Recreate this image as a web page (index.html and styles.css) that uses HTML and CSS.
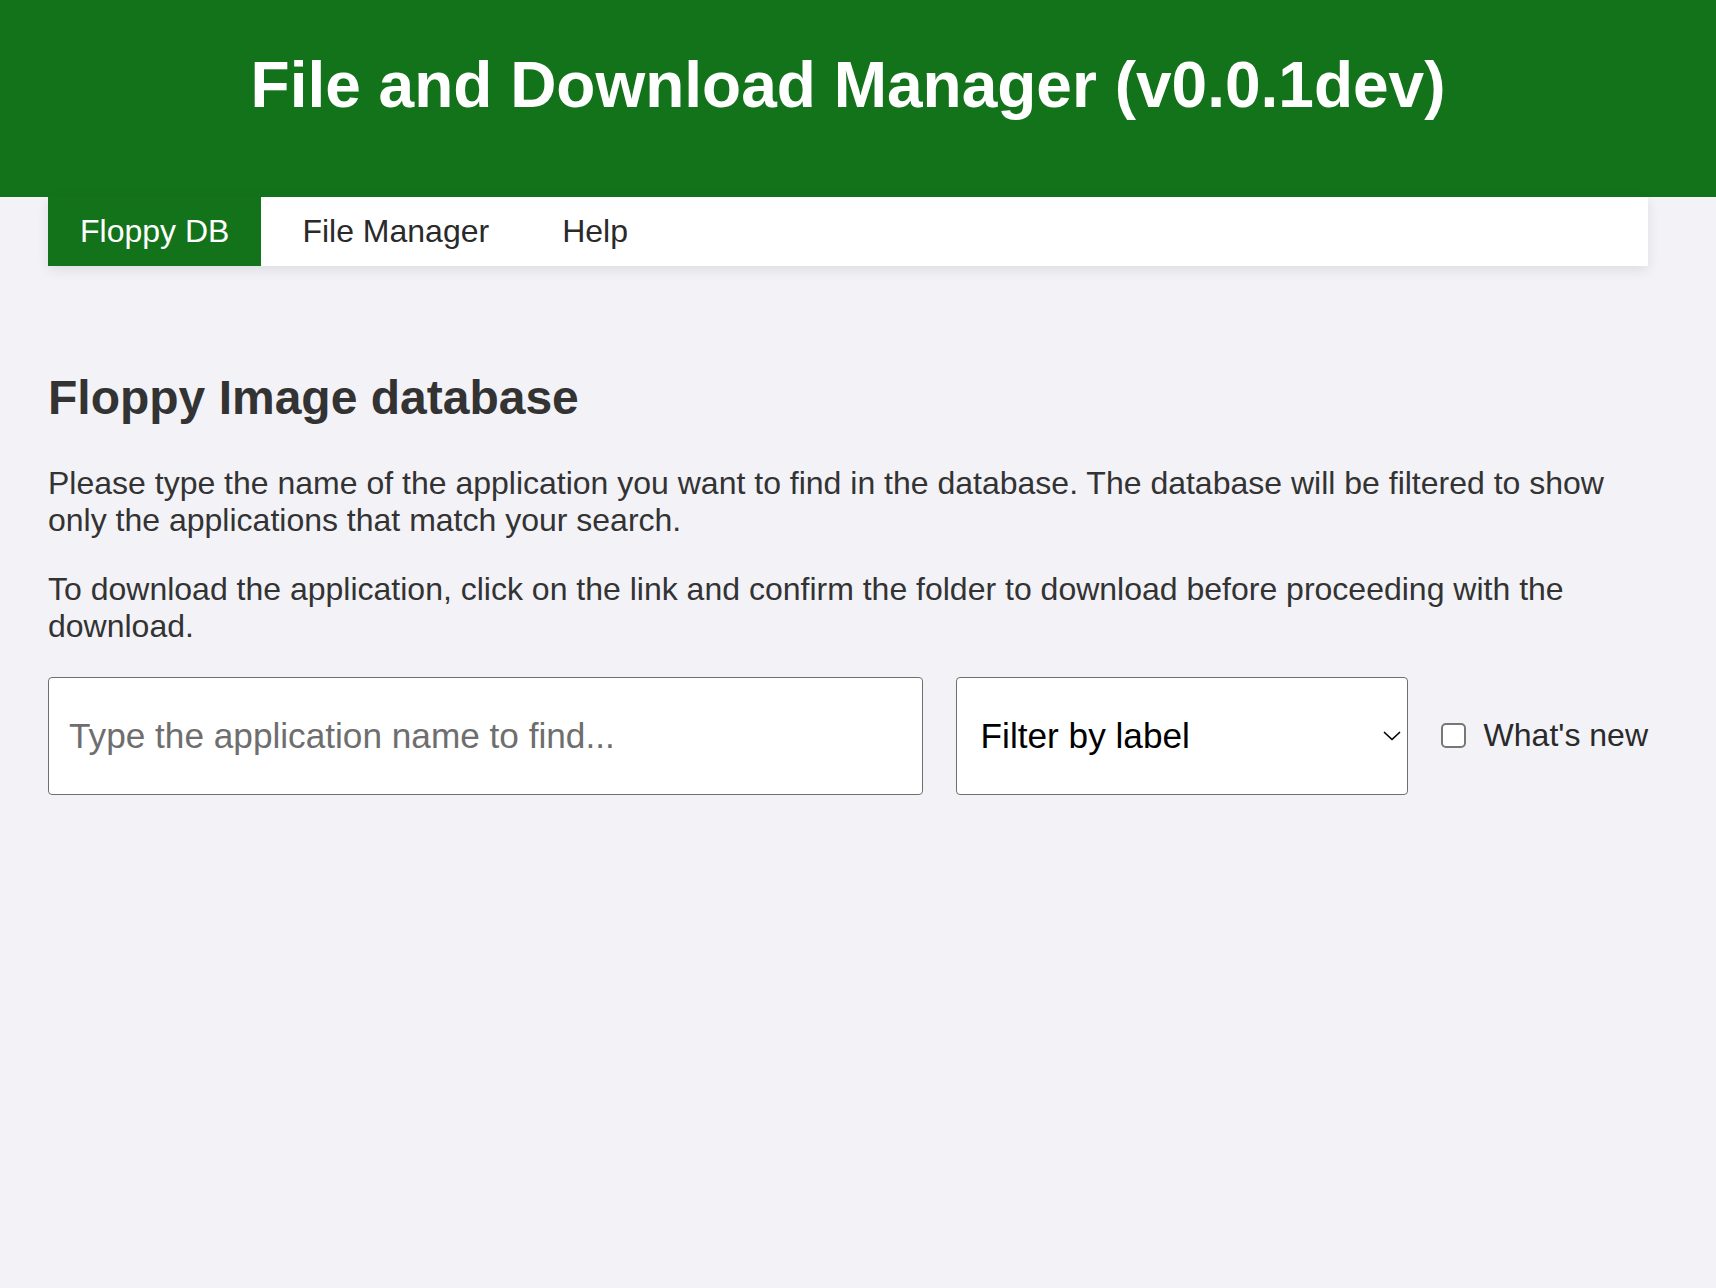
FILE: index.html
```html
<!DOCTYPE html>
<html lang="en">
<head>
<meta charset="utf-8">
<title>File and Download Manager</title>
<link rel="stylesheet" href="styles.css">
</head>
<body>
<header class="site-header">
  <div class="container">
    <h1 class="site-title">File and Download Manager (v0.0.1dev)</h1>
  </div>
</header>
<div class="container">
  <nav class="tabs">
    <a class="tab tab-active" href="#">Floppy DB</a>
    <a class="tab" href="#">File Manager</a>
    <a class="tab" href="#">Help</a>
  </nav>
  <main class="content">
    <h2 class="page-title">Floppy Image database</h2>
    <p class="text">Please type the name of the application you want to find in the database. The database will be filtered to show only the applications that match your search.</p>
    <p class="text">To download the application, click on the link and confirm the folder to download before proceeding with the download.</p>
    <div class="filters">
      <input class="search" type="text" placeholder="Type the application name to find...">
      <div class="select-wrap">
        <select class="label-select">
          <option>Filter by label</option>
        </select>
        <svg class="chevron" width="18" height="10" viewBox="0 0 18 10" aria-hidden="true"><polyline points="1.5,1.5 9,8.5 16.5,1.5" fill="none" stroke="#000" stroke-width="1.7" stroke-linecap="round" stroke-linejoin="round"/></svg>
      </div>
      <label class="check">
        <input class="check-box" type="checkbox">
        <span class="check-text">What's new</span>
      </label>
    </div>
  </main>
</div>
</body>
</html>
```
FILE: styles.css
```css
html, body {
  margin: 0;
  padding: 0;
}

body {
  background: #f2f2f7;
  color: #333333;
  font-family: "Liberation Sans", Arial, Helvetica, sans-serif;
  font-size: 32px;
  line-height: normal;
}

.container {
  margin: 0 48px;
  max-width: 1600px;
}

.site-header {
  background: #13731b;
  height: 197px;
  box-sizing: border-box;
  padding-top: 48px;
}

.site-title {
  margin: 0;
  color: #ffffff;
  font-size: 64px;
  font-weight: bold;
  text-align: center;
  line-height: normal;
}

.tabs {
  display: flex;
  gap: 9px;
  background: #ffffff;
  box-shadow: 0 4px 12px rgba(0, 0, 0, 0.09);
}

.tab {
  display: block;
  padding: 16px 32px;
  color: #2a2a2a;
  text-decoration: none;
}

.tab-active {
  background: #13731b;
  color: #ffffff;
}

.content {
  padding-top: 64px;
}

.page-title {
  font-size: 48px;
  font-weight: bold;
  margin: 0.83em 0;
  color: #333333;
}

.text {
  margin: 32px 0;
}

.filters {
  display: flex;
  align-items: center;
  gap: 33px;
  margin-top: 0;
}

.search {
  flex: 1;
  min-width: 0;
  height: 118px;
  box-sizing: border-box;
  margin: 0;
  padding: 0 20px;
  border: 1px solid #6f6f6f;
  border-radius: 4px;
  background: #ffffff;
  font-family: "Liberation Sans", Arial, Helvetica, sans-serif;
  font-size: 35.2px;
  color: #333333;
}

.search::placeholder {
  color: #6e6e6e;
}

.select-wrap {
  position: relative;
  width: 452px;
  flex: none;
}

.label-select {
  appearance: none;
  -webkit-appearance: none;
  display: block;
  width: 100%;
  height: 118px;
  box-sizing: border-box;
  margin: 0;
  padding: 0 40px 0 24px;
  border: 1px solid #6f6f6f;
  border-radius: 4px;
  background: #ffffff;
  color: #000000;
  font-family: "Liberation Sans", Arial, Helvetica, sans-serif;
  font-size: 35.2px;
}

.chevron {
  position: absolute;
  right: 7px;
  top: 54px;
  pointer-events: none;
}

.check {
  display: flex;
  align-items: center;
  gap: 18px;
  flex: none;
}

.check-box {
  appearance: none;
  -webkit-appearance: none;
  width: 25px;
  height: 25px;
  margin: 0;
  box-sizing: border-box;
  border: 2px solid #777777;
  border-radius: 5px;
  background: #ffffff;
}

.check-text {
  color: #2a2a2a;
}
```
